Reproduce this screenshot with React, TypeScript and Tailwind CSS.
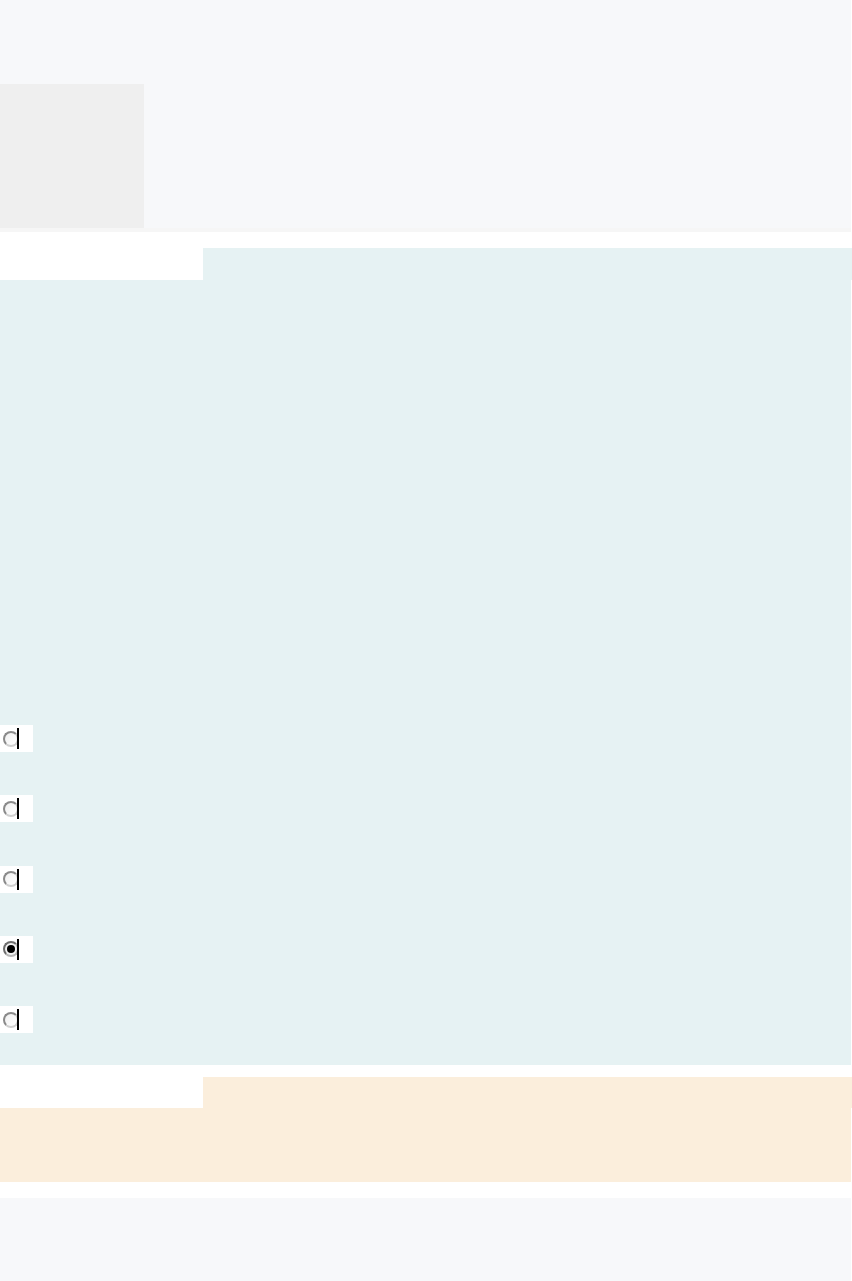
import React from "react";

function Radio({ checked }: { checked?: boolean }) {
  return (
    <div className="flex h-[27px] w-[33px] items-center bg-white">
      <div
        className={
          checked
            ? "ml-[3px] flex h-[16px] w-[16px] shrink-0 items-center justify-center rounded-full border-2 border-t-[#6e6e6e] border-l-[#6e6e6e] border-b-[#b8b8b8] border-r-[#b8b8b8] bg-[#f2f2f2]"
            : "ml-[3px] flex h-[16px] w-[16px] shrink-0 items-center justify-center rounded-full border-2 border-t-[#8a8a8a] border-l-[#8a8a8a] border-b-[#d0d0d0] border-r-[#d0d0d0] bg-gradient-to-br from-[#f0f0f0] to-[#ffffff]"
        }
      >
        {checked ? <div className="h-[8px] w-[8px] rounded-full bg-black" /> : null}
      </div>
      <div className="-ml-[2px] h-[21px] w-[2px] shrink-0 bg-black" />
    </div>
  );
}

export default function App() {
  return (
    <div className="w-[852px] bg-white" style={{ fontFamily: '"Liberation Sans", Arial, sans-serif' }}>
      <div className="h-[232px] w-[851px] bg-[#f7f8fa] pt-[84px]">
        <div className="h-[144px] w-[144px] bg-[#efefef]" />
        <div className="h-[4px] w-[851px] bg-[#f6f6f6]" />
      </div>
      <div className="mt-[16px]">
        <div className="flex h-[32px]">
          <div className="w-[203px] bg-white" />
          <div className="flex-1 bg-[#e6f2f3]" />
        </div>
        <div className="flex h-[785px] w-[851px] flex-col gap-[43.25px] bg-[#e6f2f3] pt-[445px]">
          <Radio />
          <Radio />
          <Radio />
          <Radio checked />
          <Radio />
        </div>
      </div>
      <div className="mt-[12px]">
        <div className="flex h-[31px]">
          <div className="w-[203px] bg-white" />
          <div className="flex-1 bg-[#fbeedc]" />
        </div>
        <div className="h-[74px] w-[851px] bg-[#fbeedc]" />
      </div>
      <div className="mt-[16px] h-[83px] w-[851px] bg-[#f7f8fa]" />
    </div>
  );
}
